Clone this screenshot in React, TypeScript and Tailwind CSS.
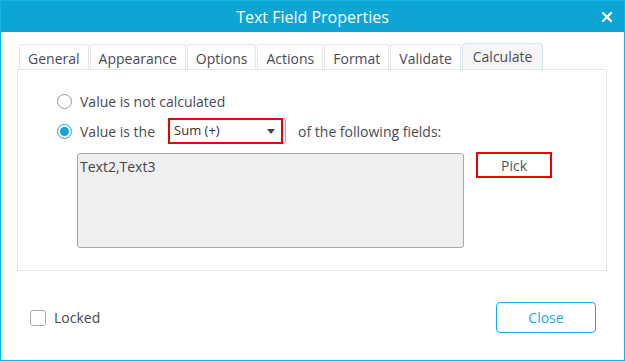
import {X} from "lucide-react";

const tabs = ["General", "Appearance", "Options", "Actions", "Format", "Validate", "Calculate"];

export default function App() {
    return (
        <div
            className="flex h-[361px] w-[625px] flex-col border border-[#12b5e3] bg-white text-[14px] text-[#4a4a55]"
            style={{fontFamily: '"Open Sans", sans-serif'}}
        >
            <div className="relative flex h-[31px] shrink-0 items-center justify-center bg-[#0ea5d5] text-[16px] text-white">
                Text Field Properties
                <X className="absolute right-[9px] top-[8px] h-4 w-4" strokeWidth={3.5}/>
            </div>

            <div className="ml-[16px] mr-[17px] mt-[11px] flex flex-col">
                <div className="flex items-end pl-[2px]">
                    {tabs.map((tab) => {
                        const active = tab === "Calculate";
                        return (
                            <div
                                key={tab}
                                className={
                                    active
                                        ? "-mb-px mr-px flex h-[27px] items-center rounded-t-[3px] border border-b-0 border-[#cfe9f5] bg-[#f6f6f6] px-[10px] pb-[2px]"
                                        : "mr-px flex h-[25px] items-center rounded-t-[3px] border border-b-0 border-[#e6e6e6] px-[8px] pt-[2px]"
                                }
                            >
                                {tab}
                            </div>
                        );
                    })}
                </div>
                <div className="flex h-[202px] flex-col border border-[#e6e6e6] px-[39px] pt-[21px]">
                    <label className="flex items-center gap-[8px]">
                        <span className="h-[15px] w-[15px] rounded-full border border-[#9a9a9a] bg-white"/>
                        Value is not calculated
                    </label>
                    <div className="mt-[6px] flex items-center">
                        <label className="flex items-center gap-[8px]">
                            <span className="flex h-[15px] w-[15px] items-center justify-center rounded-full border border-[#1a9fd8] bg-white">
                                <span className="h-[9px] w-[9px] rounded-full bg-[#1a9fd8]"/>
                            </span>
                            Value is the
                        </label>
                        <div className="ml-[13px] flex h-[26px] w-[118px] items-center rounded-[3px] border border-[#5fc3ea]">
                            <div className="flex h-[26px] w-[115px] -ml-px items-center justify-between border-2 border-[#ee0000] pl-[4px] pr-[6px] text-[13px] text-[#333]">
                                Sum (+)
                                <span className="h-0 w-0 border-x-[4px] border-t-[5px] border-x-transparent border-t-[#444]"/>
                            </div>
                        </div>
                        <span className="ml-[12px]">of the following fields:</span>
                    </div>
                    <div className="mt-[9px] flex items-start">
                        <div className="ml-[20px] h-[95px] w-[387px] rounded-[3px] border border-[#a9a9a9] bg-[#efefef] px-[2px] pt-[2px] text-[#444]">
                            Text2,Text3
                        </div>
                        <div className="-mt-px ml-[12px] flex h-[26px] w-[76px] items-center justify-center border-2 border-[#ee0000] text-[#555]">
                            Pick
                        </div>
                    </div>
                </div>
            </div>

            <div className="mt-[31px] flex items-center justify-between pl-[29px] pr-[28px]">
                <label className="flex items-center gap-[8px]">
                    <span className="h-[16px] w-[16px] rounded-[3px] border border-[#a9a9a9] bg-white"/>
                    Locked
                </label>
                <button
                    type="button"
                    className="h-[31px] w-[100px] rounded-[4px] border border-[#12a8dc] text-[#22aee0]"
                >
                    Close
                </button>
            </div>
        </div>
    );
}
